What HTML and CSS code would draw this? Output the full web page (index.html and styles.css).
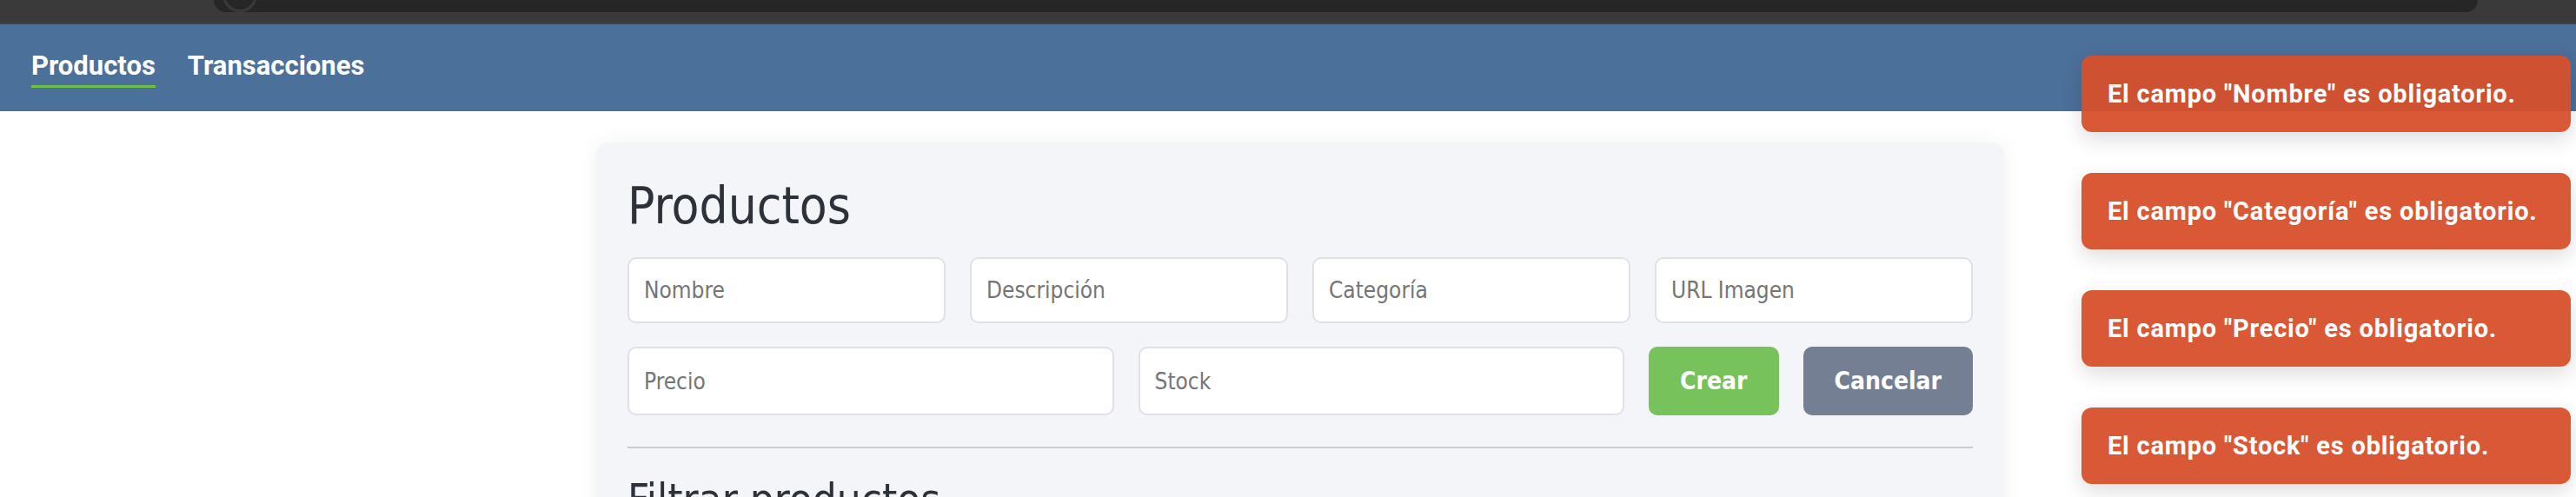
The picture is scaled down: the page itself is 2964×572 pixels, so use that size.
FILE: index.html
```html
<!DOCTYPE html>
<html lang="es">
<head>
<meta charset="utf-8">
<title>Productos</title>
<link rel="stylesheet" href="styles.css">
</head>
<body>
<div class="chrome">
  <div class="chrome-bar"><span class="chrome-dot"></span></div>
</div>
<nav class="nav">
  <a class="nav-link active" href="#">Productos</a>
  <a class="nav-link" href="#">Transacciones</a>
</nav>
<main class="page">
  <section class="card">
    <h1 class="title">Productos</h1>
    <div class="form">
      <div class="row row-top">
        <input class="field" placeholder="Nombre">
        <input class="field" placeholder="Descripción">
        <input class="field" placeholder="Categoría">
        <input class="field" placeholder="URL Imagen">
      </div>
      <div class="row row-bottom">
        <input class="field" placeholder="Precio">
        <input class="field" placeholder="Stock">
        <button class="btn btn-create">Crear</button>
        <button class="btn btn-cancel">Cancelar</button>
      </div>
    </div>
    <hr class="sep">
    <h2 class="subtitle">Filtrar productos</h2>
    <div class="row row-top">
      <input class="field" placeholder="Buscar">
    </div>
  </section>
</main>
<div class="toasts">
  <div class="toast">El campo "Nombre" es obligatorio.</div>
  <div class="toast">El campo "Categoría" es obligatorio.</div>
  <div class="toast">El campo "Precio" es obligatorio.</div>
  <div class="toast">El campo "Stock" es obligatorio.</div>
</div>
</body>
</html>
```
FILE: styles.css
```css
html, body {
  margin: 0;
  padding: 0;
  background: #ffffff;
  overflow: hidden;
  height: 572px;
}
body {
  font-family: "DejaVu Sans Condensed", "DejaVu Sans", sans-serif;
  position: relative;
}
.chrome {
  height: 26px;
  background: #3a3a3a;
  border-bottom: 2px solid #434343;
}
.chrome-bar {
  position: relative;
  margin-left: 246px;
  width: 2605px;
  height: 14px;
  background: #262626;
  border-radius: 0 0 14px 14px;
  overflow: hidden;
}
.chrome-dot {
  position: absolute;
  left: 10px;
  top: -26px;
  width: 34px;
  height: 34px;
  border-radius: 50%;
  border: 3px solid #3a3a3a;
}
.nav {
  height: 100px;
  box-sizing: border-box;
  background: #4b7099;
  display: flex;
  align-items: flex-start;
  gap: 37px;
  padding: 29px 0 0 36px;
}
.nav-link {
  font-family: Roboto, "Liberation Sans", sans-serif;
  font-weight: 700;
  font-size: 31px;
  line-height: 37px;
  color: #ffffff;
  text-decoration: none;
  padding-bottom: 4px;
  border-bottom: 3px solid transparent;
}
.nav-link.active {
  border-bottom-color: #6cbf4a;
}
.page {
  padding: 36px 0 0 685px;
}
.card {
  width: 1622px;
  box-sizing: border-box;
  background: #f4f5f9;
  border-radius: 16px;
  padding: 38px 37px 40px 37px;
  box-shadow: 0 0 24px rgba(0, 0, 0, 0.05);
}
.title {
  margin: 0 0 24px 0;
  font-weight: 400;
  font-size: 58px;
  line-height: 70px;
  color: #2c313a;
}
.form {
  display: flex;
  flex-direction: column;
  gap: 27px;
}
.row {
  display: flex;
  gap: 28px;
}
.row-top {
  height: 76px;
}
.row-bottom {
  height: 79px;
}
.field {
  flex: 1 1 0;
  min-width: 0;
  box-sizing: border-box;
  height: 100%;
  border: 2px solid #e0e1e6;
  border-radius: 10px;
  background: #ffffff;
  padding: 0 17px;
  font-family: "DejaVu Sans Condensed", "DejaVu Sans", sans-serif;
  font-size: 26px;
  color: #333333;
  outline: none;
}
.field::placeholder {
  color: #757575;
}
.btn {
  flex: 0 0 auto;
  border: none;
  border-radius: 10px;
  padding: 0 36px;
  font-family: "DejaVu Sans Condensed", "DejaVu Sans", sans-serif;
  font-weight: 700;
  font-size: 28px;
  color: #ffffff;
  cursor: pointer;
}
.btn-create {
  background: #77c25a;
}
.btn-cancel {
  background: #757f93;
}
.sep {
  margin: 36px 0 0 0;
  border: none;
  height: 2px;
  background: #c9cbd1;
}
.subtitle {
  margin: 30px 0 20px 0;
  font-weight: 400;
  font-size: 49px;
  line-height: 59px;
  color: #2c313a;
}
.toasts {
  position: absolute;
  top: 64px;
  right: 6px;
  width: 563px;
  display: flex;
  flex-direction: column;
  gap: 47px;
}
.toast {
  height: 88px;
  box-sizing: border-box;
  display: flex;
  align-items: center;
  padding: 0 30px;
  border-radius: 12px;
  background: rgba(215, 79, 43, 0.94);
  color: #ffffff;
  font-family: Roboto, "Liberation Sans", sans-serif;
  font-weight: 700;
  font-size: 29px;
  letter-spacing: 0.8px;
  box-shadow: 0 8px 24px rgba(0, 0, 0, 0.14);
}
```
